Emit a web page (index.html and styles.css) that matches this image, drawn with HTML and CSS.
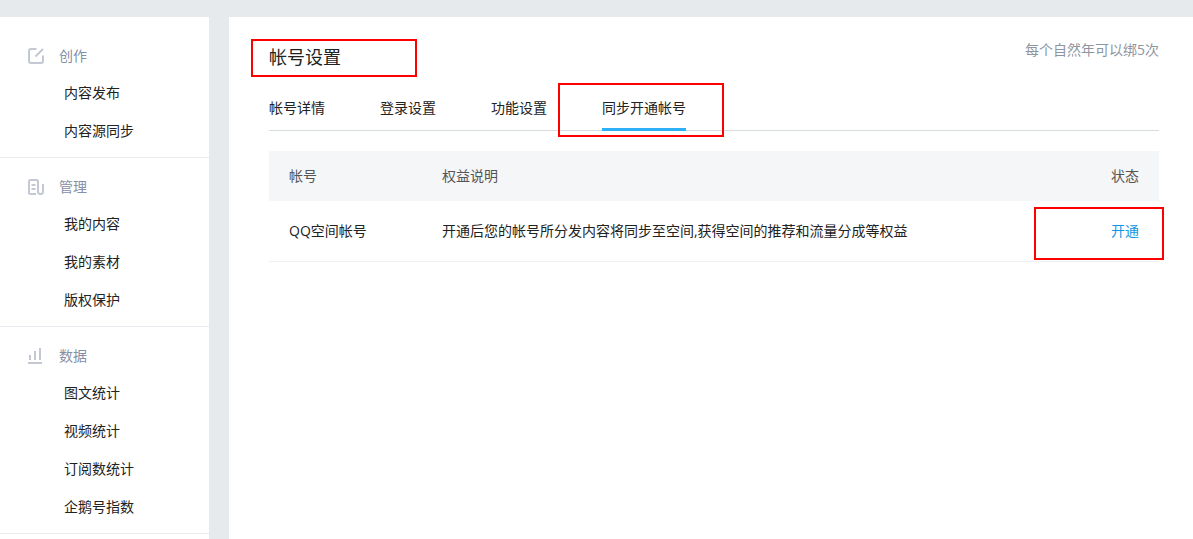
FILE: index.html
```html
<!DOCTYPE html>
<html lang="zh-CN">
<head>
  <meta charset="UTF-8">
  <meta name="viewport" content="width=device-width, initial-scale=1.0">
  <title>帐号设置</title>
  <link rel="stylesheet" href="styles.css">
</head>
<body>
  <div class="page">
    <nav class="sidebar">
      <div class="group">
        <div class="group-title">
          <svg class="icon" viewBox="0 0 18 18">
            <path d="M9.5 2H4Q2 2 2 4V14Q2 16 4 16H14Q16 16 16 14V8.500M8.500 9.500L16 2"/>
          </svg>
          创作
        </div>
        <a href="#">内容发布</a>
        <a href="#">内容源同步</a>
      </div>
      <div class="group">
        <div class="group-title">
          <svg class="icon" viewBox="0 0 18 18">
            <path d="M11 14V3.500Q11 2 9.500 2H3.500Q2 2 2 3.500V14.500Q2 16 3.500 16H9M11 13.500Q11 16 13.500 16T16 13.500V6M4.500 7H8.500M4.500 11H8.500"/>
          </svg>
          管理
        </div>
        <a href="#">我的内容</a>
        <a href="#">我的素材</a>
        <a href="#">版权保护</a>
      </div>
      <div class="group">
        <div class="group-title">
          <svg class="icon" viewBox="0 0 18 18">
            <path d="M1 16H15M3 13V8M8 13V4M13 13V1"/>
          </svg>
          数据
        </div>
        <a href="#">图文统计</a>
        <a href="#">视频统计</a>
        <a href="#">订阅数统计</a>
        <a href="#">企鹅号指数</a>
      </div>
    </nav>

    <main class="main">
      <header class="header">
        <h1 class="mark mark-title">帐号设置</h1>
        <p class="note">每个自然年可以绑5次</p>
      </header>

      <div class="tabs">
        <a href="#">帐号详情</a>
        <a href="#">登录设置</a>
        <a href="#">功能设置</a>
        <a href="#" class="active mark mark-tab">同步开通帐号</a>
      </div>

      <table class="accounts">
        <thead>
          <tr>
            <th class="name">帐号</th>
            <th>权益说明</th>
            <th class="status">状态</th>
          </tr>
        </thead>
        <tbody>
          <tr>
            <td>QQ空间帐号</td>
            <td>开通后您的帐号所分发内容将同步至空间,获得空间的推荐和流量分成等权益</td>
            <td class="status mark mark-status"><a href="#">开通</a></td>
          </tr>
        </tbody>
      </table>
    </main>
  </div>
</body>
</html>
```
FILE: styles.css
```css
*,
*::after {
  box-sizing: border-box;
}
body {
  margin: 0;
  background: #e6eaed;
  color: #222;
  font-family: "Open Sans", "Noto Sans CJK SC", sans-serif;
  font-size: 14px;
}
a {
  color: inherit;
  text-decoration: none;
}
.page {
  display: flex;
  gap: 20px;
  min-height: 100vh;
  padding-top: 17px;
}

/* sidebar */
.sidebar {
  flex: 0 0 209px;
  padding-top: 10px;
  background: #fff;
}
.group {
  padding: 10px 0 7px;
  border-bottom: 1px solid #e7ebf0;
}
.group-title {
  display: flex;
  align-items: center;
  gap: 14px;
  padding-left: 27px;
  line-height: 37px;
  color: #8590a6;
}
.group a {
  display: block;
  padding-left: 64px;
  line-height: 38px;
}
.icon {
  width: 18px;
  height: 18px;
  fill: none;
  stroke: #c3c8d3;
  stroke-width: 2;
}

/* content */
.main {
  flex: 1;
  min-width: 0;
  padding: 22px 34px 40px 40px;
  background: #fff;
}
.header {
  display: flex;
  justify-content: space-between;
}
.header h1 {
  margin: 0;
  font-size: 18px;
  font-weight: normal;
  line-height: 36px;
}
.note {
  margin: 0;
  line-height: 22px;
  color: #8e959f;
}
.tabs {
  display: flex;
  gap: 55px;
  margin: 10px 0 20px;
  border-bottom: 1px solid #d6dde0;
}
.tabs a {
  margin-bottom: -1px;
  padding-top: 3px;
  border-bottom: 3px solid transparent;
  line-height: 40px;
}
.tabs .active {
  border-bottom-color: #2eb0f7;
}
.accounts {
  width: 100%;
  border-collapse: separate;
  border-spacing: 0;
}
.accounts th,
.accounts td {
  padding: 0 20px;
  text-align: left;
}
.accounts th {
  background: #f4f6f8;
  color: #555;
  font-weight: normal;
  line-height: 50px;
}
.accounts td {
  border-bottom: 1px solid #eef0f2;
  line-height: 60px;
}
.accounts .name {
  width: 153px;
}
.accounts .status {
  text-align: right;
}
.status a {
  color: #1296e6;
}

/* red highlight frames */
.mark {
  position: relative;
}
.mark::after {
  content: "";
  position: absolute;
  border: 2px solid #f00;
  pointer-events: none;
}
.mark-title::after {
  top: 0;
  left: -18px;
  width: 166px;
  height: 38px;
}
.mark-tab::after {
  top: -2px;
  left: -44px;
  width: 166px;
  height: 54px;
}
.mark-status::after {
  top: 6px;
  right: -5px;
  width: 130px;
  height: 53px;
}
```
